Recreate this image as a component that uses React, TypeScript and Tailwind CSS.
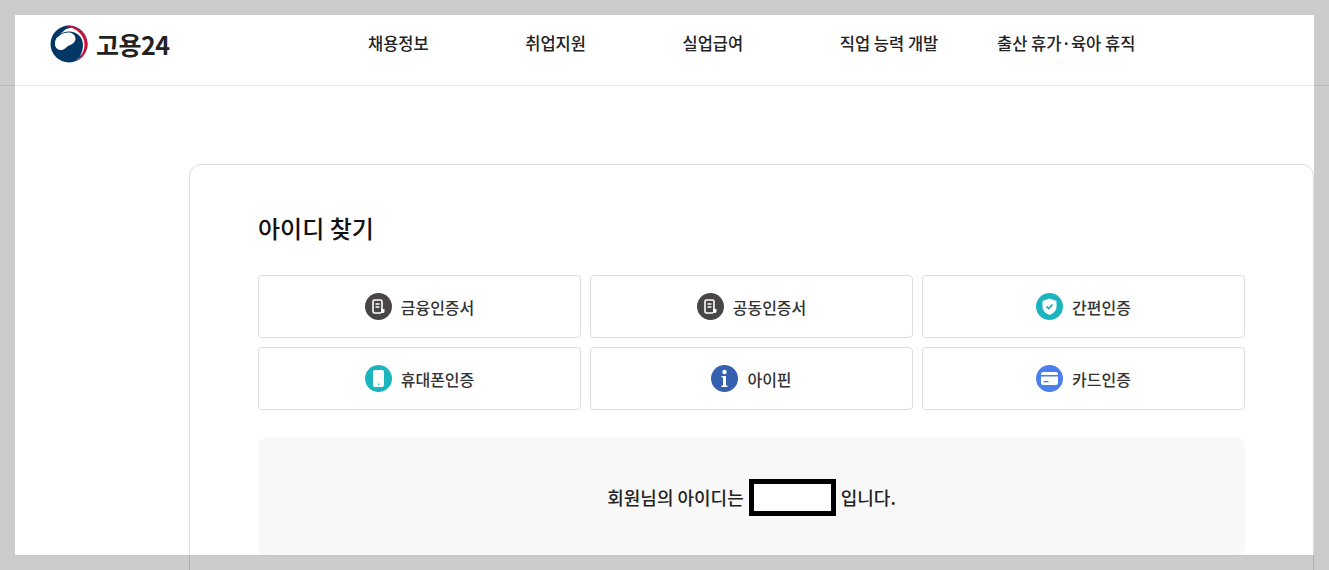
const font = "font-['Noto_Sans_CJK_KR','Noto_Sans',sans-serif]";

function Logo() {
  return (
    <svg width="38" height="38" viewBox="0 0 38 38" className="shrink-0">
      <circle cx="19" cy="19" r="18.5" fill="#003764" />
      <path d="M5 21C4 12 11 6.500 19 6.500C27 6.500 33 12 33 20C33 27 30 33 25 36.500L33 28L37 19L34 9L24 2L16 4L8 11Z" fill="#fff" />
      <path d="M15 1C26 -1 37.500 8 37.500 19C37.500 26 33 33 26.500 36C32 31 34.500 25 34.500 19.500C34.500 10 26 2.500 15 1Z" fill="#d4113c" />
      <path d="M5 20.500C5.500 23.500 8 26 11 26C15 26 16.500 23 19 21C24 19 26 17 25.500 13.500C28.500 15 31 17.500 31 21C31 27 27 33 19 33C11 33 5 27 5 20.500Z" fill="#003764" />
      <path d="M5 20C5 12 12 7.500 18.500 7.500C22.500 7.500 25 10 25.500 13.500C25.500 17 23 19 19 20.500C16.500 21.500 15 25 11 25C8 25 5.500 23 5 20Z" fill="#fff" />
      <path d="M12 17.500C13.500 14 17.500 13 19.500 15C21 17 19 20 16 21C13.500 22 11.500 20 12 17.500Z" fill="#fff" />
    </svg>
  );
}

function CertIcon() {
  return (
    <span className="flex h-[27px] w-[27px] shrink-0 items-center justify-center rounded-full bg-[#4a4545]">
      <svg width="27" height="27" viewBox="0 0 27 27" fill="none" stroke="#fff">
        <path d="M17 16V8.500C17 7.500 16.500 7 15.500 7H9.500C8.500 7 8 7.500 8 8.500V18.500C8 19.500 8.500 20 9.500 20H16" strokeWidth="1.600" />
        <path d="M10.500 11H14.500M10.500 14H14.500" strokeWidth="1.400" />
        <path d="M16 16H19.500V18.500C19.500 19.500 18.500 20 17.500 20H16V16Z" fill="#fff" stroke="none" />
      </svg>
    </span>
  );
}

function ShieldIcon() {
  return (
    <span className="flex h-[27px] w-[27px] shrink-0 items-center justify-center rounded-full bg-[#1cb5bf]">
      <svg width="27" height="27" viewBox="0 0 27 27">
        <path d="M13.500 5.500L20.500 8V13.500C20.500 17.500 17.500 20.500 13.500 22C9.500 20.500 6.500 17.500 6.500 13.500V8Z" fill="#fff" />
        <path d="M10.500 13.500L12.800 15.500L16.500 11.500" fill="none" stroke="#1cb5bf" strokeWidth="1.800" />
      </svg>
    </span>
  );
}

function PhoneIcon() {
  return (
    <span className="flex h-[27px] w-[27px] shrink-0 items-center justify-center rounded-full bg-[#1cb5bf]">
      <svg width="27" height="27" viewBox="0 0 27 27">
        <rect x="8" y="5" width="11" height="17" rx="2" fill="#fff" />
        <rect x="13" y="18.500" width="1.200" height="1.500" fill="#1cb5bf" />
      </svg>
    </span>
  );
}

function InfoIcon() {
  return (
    <span className="flex h-[27px] w-[27px] shrink-0 items-center justify-center rounded-full bg-[#3560ae]">
      <svg width="27" height="27" viewBox="0 0 27 27" fill="#fff">
        <circle cx="13.500" cy="7" r="2.200" />
        <path d="M10.500 11H15V20.500H16.500V22H10.500V20.500H12V12.500H10.500Z" />
      </svg>
    </span>
  );
}

function CardIcon() {
  return (
    <span className="flex h-[27px] w-[27px] shrink-0 items-center justify-center rounded-full bg-[#4b7fe9]">
      <svg width="27" height="27" viewBox="0 0 27 27">
        <rect x="5" y="7" width="17" height="13" rx="2" fill="#fff" />
        <rect x="5" y="10" width="17" height="1.500" fill="#4b7fe9" />
        <rect x="7.500" y="16" width="5" height="1.300" fill="#4b7fe9" />
      </svg>
    </span>
  );
}

const methods = [
  { label: "금융인증서", icon: <CertIcon /> },
  { label: "공동인증서", icon: <CertIcon /> },
  { label: "간편인증", icon: <ShieldIcon /> },
  { label: "휴대폰인증", icon: <PhoneIcon /> },
  { label: "아이핀", icon: <InfoIcon /> },
  { label: "카드인증", icon: <CardIcon /> },
];

const menu = ["채용정보", "취업지원", "실업급여", "직업 능력 개발", "출산 휴가·육아 휴직"];

export default function App() {
  return (
    <div className={`relative h-[570px] w-[1329px] overflow-hidden bg-white text-[#222] ${font}`}>
      <header className="flex h-[86px] items-start border-b border-[#e8e8e8] pl-[50px]">
        <div className="mt-[25px] flex w-[318px] items-center gap-[8px]">
          <Logo />
          <span className="text-[25px] font-bold leading-[36px] tracking-[-0.5px] text-[#222]">고용24</span>
        </div>
        <nav className="mt-[29px] flex">
          {menu.map((m) => (
            <span key={m} className="w-[157.25px] whitespace-nowrap text-[16.5px] font-medium leading-[28px]">
              {m}
            </span>
          ))}
        </nav>
      </header>

      <main className="ml-[189px] mt-[78px] w-[1125px] rounded-t-[12px] border border-[#dedede] px-[68px] pt-[45px] h-[500px]">
        <h1 className="text-[24px] font-medium leading-[36px] text-[#111]">아이디 찾기</h1>
        <div className="mt-[29px] grid grid-cols-3 gap-[9px]">
          {methods.map((m) => (
            <button
              key={m.label}
              className="flex h-[63px] items-center justify-center gap-[9px] rounded-[4px] border border-[#dcdcdc] bg-white text-[16px] font-medium text-[#333]"
            >
              {m.icon}
              <span>{m.label}</span>
            </button>
          ))}
        </div>
        <div className="mt-[27px] flex h-[120px] items-center justify-center rounded-[10px] bg-[#f8f8f8] text-[18px] font-medium text-[#222]">
          <span>회원님의 아이디는</span>
          <span className="mx-[5px] h-[37px] w-[87px] border-[5px] border-black bg-white" />
          <span>입니다.</span>
        </div>
      </main>

      <div className="pointer-events-none absolute left-[15px] top-[15px] h-[540px] w-[1299px] shadow-[0_0_0_2000px_rgba(0,0,0,0.2)]" />
    </div>
  );
}
